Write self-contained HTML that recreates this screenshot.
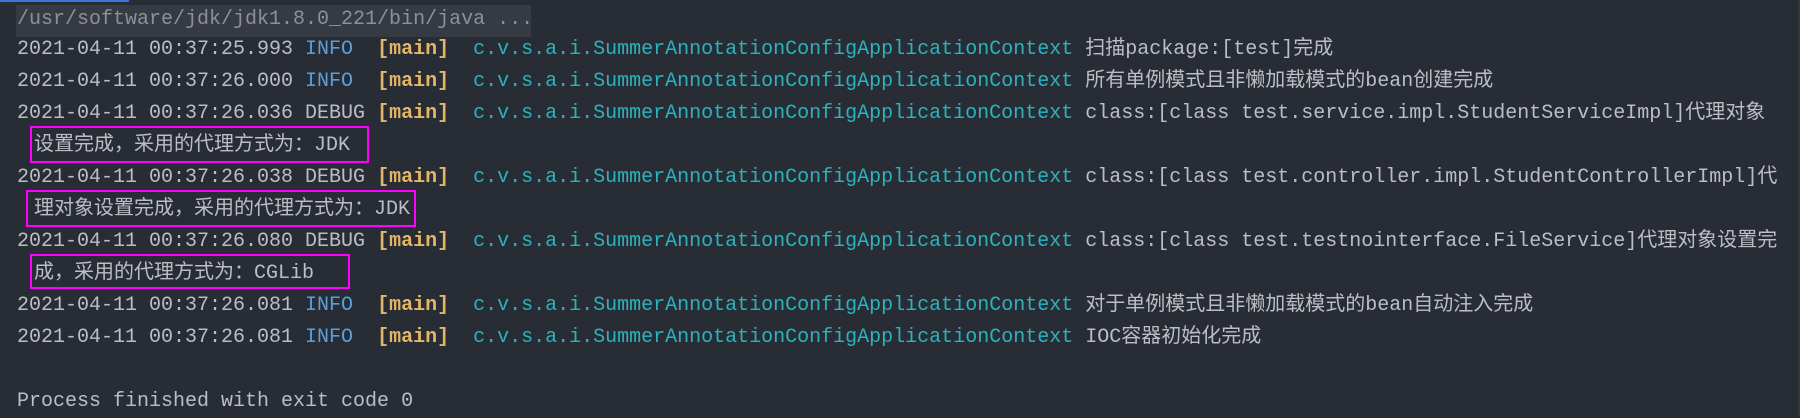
<!DOCTYPE html>
<html><head><meta charset="utf-8"><style>
html,body{margin:0;padding:0;}
body{width:1800px;height:416px;background:#282c34;position:relative;overflow:hidden;
font-family:"Liberation Mono","Noto Sans CJK SC",monospace;font-size:20px;color:#bbbec4;}
.l{position:absolute;left:17px;height:32px;line-height:32px;white-space:pre;}
.i{color:#5a9fe0}.m{color:#e5b567;font-weight:bold}.c{color:#2bb3bd}
.hdr{position:absolute;left:16px;top:5px;width:515px;height:32px;background:#363a42;}
.box{position:absolute;border:2px solid #f0f;box-sizing:border-box;}
.cj{font-family:"Noto Sans CJK SC",sans-serif;}
</style></head><body>
<div style="position:absolute;left:0;top:0;width:129px;height:2px;background:#3d75d6"></div>
<div style="position:absolute;right:0;top:0;width:2px;height:416px;background:#32363e"></div>
<div class="hdr"></div>
<div class="l" style="top:4px;color:#8d9097">/usr/software/jdk/jdk1.8.0_221/bin/java ...</div>
<div class="l" style="top:34px">2021-04-11 00:37:25.993 <span class="i">INFO </span> <span class="m">[main]</span>  <span class="c">c.v.s.a.i.SummerAnnotationConfigApplicationContext</span> 扫描package:[test]完成</div>
<div class="l" style="top:66px">2021-04-11 00:37:26.000 <span class="i">INFO </span> <span class="m">[main]</span>  <span class="c">c.v.s.a.i.SummerAnnotationConfigApplicationContext</span> 所有单例模式且非懒加载模式的bean创建完成</div>
<div class="l" style="top:98px">2021-04-11 00:37:26.036 DEBUG <span class="m">[main]</span>  <span class="c">c.v.s.a.i.SummerAnnotationConfigApplicationContext</span> class:[class test.service.impl.StudentServiceImpl]代理对象</div>
<div class="l" style="top:130px;left:34px">设置完成，采用的代理方式为：JDK</div>
<div class="box" style="left:30px;top:126px;width:339px;height:37px"></div>
<div class="l" style="top:162px">2021-04-11 00:37:26.038 DEBUG <span class="m">[main]</span>  <span class="c">c.v.s.a.i.SummerAnnotationConfigApplicationContext</span> class:[class test.controller.impl.StudentControllerImpl]代</div>
<div class="l" style="top:194px;left:34px">理对象设置完成，采用的代理方式为：JDK</div>
<div class="box" style="left:26px;top:190px;width:390px;height:37px"></div>
<div class="l" style="top:226px">2021-04-11 00:37:26.080 DEBUG <span class="m">[main]</span>  <span class="c">c.v.s.a.i.SummerAnnotationConfigApplicationContext</span> class:[class test.testnointerface.FileService]代理对象设置完</div>
<div class="l" style="top:258px;left:34px">成，采用的代理方式为：CGLib</div>
<div class="box" style="left:30px;top:254px;width:320px;height:35px"></div>
<div class="l" style="top:290px">2021-04-11 00:37:26.081 <span class="i">INFO </span> <span class="m">[main]</span>  <span class="c">c.v.s.a.i.SummerAnnotationConfigApplicationContext</span> 对于单例模式且非懒加载模式的bean自动注入完成</div>
<div class="l" style="top:322px">2021-04-11 00:37:26.081 <span class="i">INFO </span> <span class="m">[main]</span>  <span class="c">c.v.s.a.i.SummerAnnotationConfigApplicationContext</span> IOC容器初始化完成</div>
<div class="l" style="top:386px">Process finished with exit code 0</div>
</body></html>
